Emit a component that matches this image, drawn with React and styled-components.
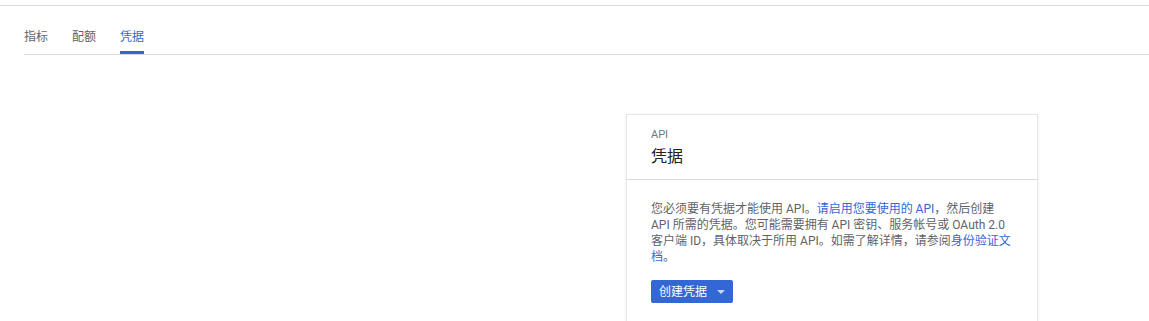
import React from "react";
import styled, { createGlobalStyle } from "styled-components";

const Global = createGlobalStyle`
  html, body { margin: 0; padding: 0; background: #fff; }
  body {
    font-family: Roboto, "Noto Sans CJK SC", "Noto Sans", sans-serif;
    color: #212121;
  }
  * { box-sizing: border-box; }
`;

const TopRule = styled.div`
  height: 6px;
  border-bottom: 1px solid #dadada;
`;

const TabBar = styled.nav`
  display: flex;
  gap: 24px;
  margin-left: 24px;
  border-bottom: 1px solid #dadada;
`;

const Tab = styled.div`
  font-size: 12px;
  line-height: 16px;
  padding: 23px 0 6px;
  color: ${(p) => (p.$active ? "#3367d6" : "#5f6368")};
  border-bottom: 3px solid ${(p) => (p.$active ? "#3367d6" : "transparent")};
  cursor: pointer;
`;

const Content = styled.main`
  display: grid;
  grid-template-columns: 602px 412px;
  padding: 59px 0 0 24px;
`;

const Card = styled.section`
  grid-column: 2;
  background: #fff;
  border: 1px solid #e6e6e6;
  border-bottom: none;
  box-shadow: 0 1px 3px rgba(0, 0, 0, 0.08);
  height: 207px;
`;

const CardHeader = styled.header`
  padding: 12px 24px 8px;
  border-bottom: 1px solid #dadada;
`;

const Overline = styled.div`
  font-size: 11px;
  line-height: 16px;
  color: #757575;
`;

const Title = styled.h2`
  margin: 0;
  font-size: 16px;
  line-height: 28px;
  font-weight: 400;
  color: #212121;
`;

const CardBody = styled.div`
  padding: 21px 24px 0;
`;

const Paragraph = styled.p`
  margin: 0;
  font-size: 12px;
  line-height: 16px;
  color: #5f6368;
`;

const Link = styled.a`
  color: #3367d6;
  text-decoration: none;
`;

const Button = styled.button`
  margin-top: 15px;
  display: inline-flex;
  align-items: center;
  gap: 8px;
  height: 23px;
  padding: 0 8px;
  border: none;
  border-radius: 2px;
  background: #3367d6;
  color: #fff;
  font-family: inherit;
  font-size: 12px;
  line-height: 16px;
  cursor: pointer;
`;

const Caret = styled.span`
  width: 0;
  height: 0;
  border-left: 4px solid transparent;
  border-right: 4px solid transparent;
  border-top: 4px solid #c9d6f5;
  margin-left: 2px;
`;

export default function App() {
  return (
    <>
      <Global />
      <TopRule />
      <TabBar>
        <Tab>指标</Tab>
        <Tab>配额</Tab>
        <Tab $active>凭据</Tab>
      </TabBar>
      <Content>
        <Card>
          <CardHeader>
            <Overline>API</Overline>
            <Title>凭据</Title>
          </CardHeader>
          <CardBody>
            <Paragraph>
              您必须要有凭据才能使用 API。<Link href="#">请启用您要使用的 API</Link>，然后创建
              API 所需的凭据。您可能需要拥有 API 密钥、服务帐号或 OAuth 2.0
              客户端 ID，具体取决于所用 API。如需了解详情，请参阅<Link href="#">身份验证文档</Link>。
            </Paragraph>
            <Button>
              创建凭据
              <Caret />
            </Button>
          </CardBody>
        </Card>
      </Content>
    </>
  );
}
